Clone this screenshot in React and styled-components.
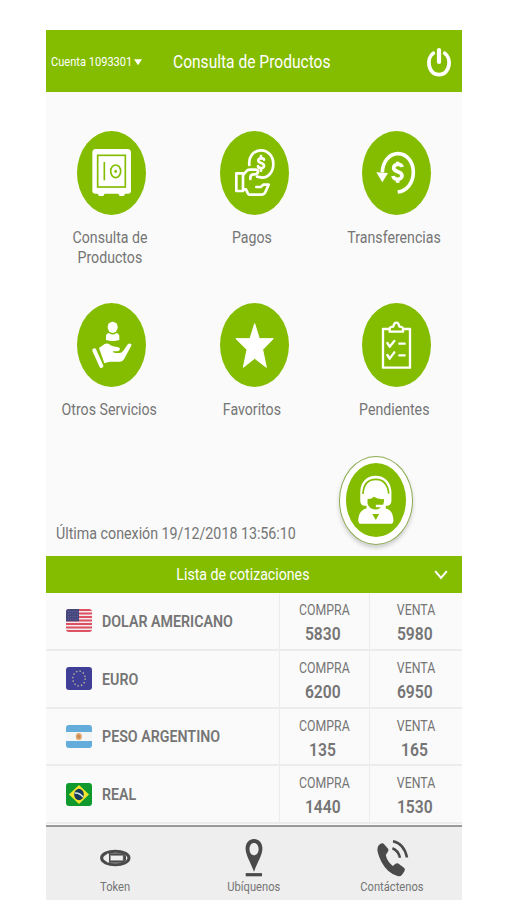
import React, { Fragment } from 'react';
import styled, { createGlobalStyle } from 'styled-components';

const GREEN = '#84bd00';

const SafeIcon = () => (
  <TileSvg viewBox="21 18 207 252">
    <path fill="#fff" d="M77 72H172Q183 72 183 83V197Q183 206 174 206H165L162 213H149L145 206H104L100 213H87L83 206H76Q67 206 67 197V83Q67 72 77 72Z" />
    <rect x="83" y="91" width="83" height="95" fill="none" stroke={GREEN} strokeWidth="5" />
    <path d="M103 111V166" stroke={GREEN} strokeWidth="5" />
    <ellipse cx="137" cy="139" rx="15" ry="19" fill="none" stroke={GREEN} strokeWidth="5" />
    <ellipse cx="137" cy="139" rx="4" ry="5" fill={GREEN} />
  </TileSvg>
);

const PayIcon = () => (
  <TileSvg viewBox="28 18 207 252">
    <g fill="none" stroke="#fff" strokeWidth="8" strokeLinejoin="round" strokeLinecap="round">
      <rect x="77" y="145" width="20" height="53" />
      <path d="M98 149L109 137Q112 134 118 134H136Q143 135 142 142Q141 148 130 148Q119 148 119 158V162" />
      <path d="M98 193H106L112 206Q114 209 119 209H153Q162 208 165 199L174 179H158L150 186H137" />
      <path d="M116 120C113 96 128 76 151 76C172 76 188 94 188 116C188 140 174 158 154 158L139 155" />
      <path d="M160 104C159 99 144 98 143 106C142 116 161 112 160 123C159 132 143 131 142 123M151 93V99M151 130V137" />
    </g>
  </TileSvg>
);

const TransferIcon = () => (
  <TileSvg viewBox="66 18 207 252">
    <path d="M127 142C128 111 147 86 174 86C201 86 220 111 220 142C220 174 200 198 173 201" fill="none" stroke="#fff" strokeWidth="11" />
    <path d="M109 142L144 144L127 172Z" fill="#fff" />
    <path d="M186 126C184 115 161 116 161 129C162 143 186 137 186 152C186 166 161 166 159 153M173 110V119M173 162V173" fill="none" stroke="#fff" strokeWidth="11" />
  </TileSvg>
);

const ServicesIcon = () => (
  <TileSvg viewBox="66 15 207 252">
    <ellipse cx="173" cy="88" rx="15" ry="17" fill="#fff" />
    <path d="M153 126V115Q153 107 162 105Q173 114 184 105Q193 107 193 115V126Q173 132 153 126Z" fill="#fff" />
    <path d="M118 157L139 204" stroke="#fff" strokeWidth="12" strokeLinecap="round" />
    <path fill="#fff" d="M132 150L149 138Q153 135 160 137Q172 147 186 147Q194 147 195 153Q195 159 187 160H173Q174 165 181 165H193Q200 165 205 158L219 138Q225 134 229 139Q230 141 228 145L207 184Q203 191 195 191H167Q157 191 148 196Z" />
  </TileSvg>
);

const StarIcon = () => (
  <TileSvg viewBox="28 15 207 252">
    <path fill="#fff" stroke="#fff" strokeWidth="3" strokeLinejoin="round" d="M132 77L146 122H188L156 155L167 208L132 181L98 208L109 155L76 122H118Z" />
  </TileSvg>
);

const PendingIcon = () => (
  <TileSvg viewBox="36 15 207 252">
    <g fill="none" stroke="#fff" strokeWidth="7" strokeLinejoin="round" strokeLinecap="round">
      <path d="M117 93H99V209H180V93H160" />
      <path d="M119 101V92Q120 86 130 86Q132 74 139 74Q146 74 148 86Q158 86 159 92V101Z" />
      <path d="M112 135L119 146L133 129M148 137H164M112 171L119 182L133 163M148 172H164" />
    </g>
  </TileSvg>
);

const AgentIcon = () => (
  <svg viewBox="48 40 181 222" width="60" height="74">
    <path fill="#fff" d="M91 153V125C93 94 112 78 138 78C164 78 183 96 185 125V154Q184 165 175 168H168V177C182 181 190 190 191 212Q191 223 183 223H94Q85 223 85 212C86 190 96 180 110 176V168H101Q91 165 91 153Z" />
    <path d="M99 133C101 101 117 89 138 89C160 89 174 104 177 132" fill="none" stroke={GREEN} strokeWidth="5" />
    <path fill={GREEN} d="M113 148Q125 149 132 141Q146 150 163 148Q163 158 160 165H138V173H154Q147 180 136 180Q119 178 113 162ZM127 193H148L138 211Z" />
  </svg>
);

const UsaFlag = () => (
  <FlagSvg viewBox="0 0 26 23">
    <rect width="26" height="23" fill="#f4e9ec" />
    <path d="M0 1H26M0 4.5H26M0 8H26M0 11.5H26M0 15H26M0 18.5H26M0 22H26" stroke="#dc5262" strokeWidth="1.8" />
    <rect width="13" height="12.3" fill="#46467f" />
    <path d="M2 2.5H12M2 5H12M2 7.5H12M2 10H12" stroke="#77779f" strokeWidth="0.7" strokeDasharray="1 1.2" />
  </FlagSvg>
);

const EuroFlag = () => (
  <FlagSvg viewBox="0 0 26 23">
    <rect width="26" height="23" fill="#403f98" />
    <ellipse cx="13" cy="11.5" rx="6.2" ry="7.4" fill="none" stroke="#c0bd92" strokeWidth="1.3" strokeDasharray="1.4 2.17" />
  </FlagSvg>
);

const ArgentinaFlag = () => (
  <FlagSvg viewBox="0 0 26 23">
    <rect width="26" height="23" fill="#f3f5f7" />
    <path d="M0 0H26V7H0ZM0 16H26V23H0Z" fill="#64acd9" />
    <ellipse cx="12.8" cy="11.5" rx="3" ry="3.6" fill="#dfa467" />
    <ellipse cx="12.8" cy="11.5" rx="1.3" ry="1.7" fill="#c48653" />
  </FlagSvg>
);

const BrazilFlag = () => (
  <FlagSvg viewBox="0 0 26 23">
    <rect width="26" height="23" fill="#109a2d" />
    <path d="M3 11.5L13 2L23 11.5L13 21Z" fill="#f1e52d" />
    <ellipse cx="13" cy="11.5" rx="4.8" ry="5.7" fill="#173b59" />
    <path d="M8.7 10Q13.5 9.5 17 14" fill="none" stroke="#d8e7e7" strokeWidth="1.5" />
  </FlagSvg>
);

const TokenIcon = () => (
  <svg width="31" height="40" viewBox="0 0 31 40">
    <ellipse cx="15.3" cy="23" rx="13.7" ry="6.8" fill="#eee" stroke="#4a4a4a" strokeWidth="3" />
    <path d="M9 18.3H23L26 21V25L23 27.7H9Z" fill="#4a4a4a" />
    <rect x="10.5" y="20.6" width="12.5" height="4.8" fill="#eee" stroke="#999" strokeWidth="0.6" />
    <path d="M7.7 18.5V27.5" stroke="#eee" strokeWidth="1.2" />
  </svg>
);

const PinIcon = () => (
  <svg width="18" height="40" viewBox="0 0 18 40">
    <path fill="#4a4a4a" fillRule="evenodd" d="M9 4C14 4 17.4 8 17.4 13.5C17.4 20 12.5 27 9 36.8C5.5 27 .6 20 .6 13.5C.6 8 4 4 9 4ZM9 8C6.2 8 4.5 10.7 4.5 14.1C4.5 17.6 6.2 20.3 9 20.3C11.8 20.3 13.6 17.6 13.6 14.1C13.6 10.7 11.8 8 9 8Z" />
    <path d="M.7 39.7H17" stroke="#4a4a4a" strokeWidth="3.2" />
  </svg>
);

const CallIcon = () => (
  <svg width="31" height="40" viewBox="0 0 31 40">
    <path fill="#4a4a4a" d="M2 10L4 8.5Q6 7.7 7.4 9.6L11.2 14Q12 15.8 10.4 17.5L8.8 20Q9.8 26 15.7 31L19 28.6Q20.7 27.5 22.3 29.2L27.3 33Q28.5 34.6 27.3 36.5L24.8 40Q23.5 41.7 20.5 41Q10.6 38.4 4.5 27Q-.8 16.2 .8 12Q1 10.8 2 10Z" />
    <path d="M16 6.3Q27 8.5 30 22.5M15.4 13.2Q21 15 23 22.7" fill="none" stroke="#4a4a4a" strokeWidth="2.5" />
  </svg>
);

const services = [
  { lines: ['Consulta de', 'Productos'], icon: SafeIcon },
  { lines: ['Pagos'], icon: PayIcon },
  { lines: ['Transferencias'], icon: TransferIcon },
  { lines: ['Otros Servicios'], icon: ServicesIcon },
  { lines: ['Favoritos'], icon: StarIcon },
  { lines: ['Pendientes'], icon: PendingIcon },
];

const rates = [
  { name: 'DOLAR AMERICANO', flag: UsaFlag, buy: 5830, sell: 5980 },
  { name: 'EURO', flag: EuroFlag, buy: 6200, sell: 6950 },
  { name: 'PESO ARGENTINO', flag: ArgentinaFlag, buy: 135, sell: 165 },
  { name: 'REAL', flag: BrazilFlag, buy: 1440, sell: 1530 },
];

const links = [
  { label: 'Token', icon: TokenIcon },
  { label: 'Ubíquenos', icon: PinIcon },
  { label: 'Contáctenos', icon: CallIcon },
];

const App = () => {
  return (
    <Fragment>
      <GlobalStyle />
      <Screen>
        <Header>
          <Account>
            <Text size={13.3} left="true">Cuenta 1093301</Text>
            <Caret />
          </Account>
          <Title>
            <Text size={18.7} left="true">Consulta de Productos</Text>
          </Title>
          <svg width="24" height="30" viewBox="0 0 24 30">
            <path d="M6.3 6.2C-.8 11 .5 27.6 12 27.6C23.5 27.6 24.8 11 17.7 6.2" fill="none" stroke="#fff" strokeWidth="3.8" strokeLinecap="round" />
            <path d="M12 3V15" stroke="#fff" strokeWidth="4.2" strokeLinecap="round" />
          </svg>
        </Header>
        <Services>
          {services.map(({ lines, icon: Icon }) => (
            <Tile key={lines[0]}>
              <Disc><Icon /></Disc>
              <TileLabel>
                {lines.map(line => <Text key={line} size={17}>{line}</Text>)}
              </TileLabel>
            </Tile>
          ))}
        </Services>
        <Session>
          <LastLogin>
            <Text size={17.1} left="true">Última conexión 19/12/2018 13:56:10</Text>
          </LastLogin>
          <AgentButton>
            <AgentDisc><AgentIcon /></AgentDisc>
          </AgentButton>
        </Session>
        <RatesBar>
          <RatesTitle><Text size={17}>Lista de cotizaciones</Text></RatesTitle>
          <svg width="14" height="10" viewBox="0 0 14 10">
            <path d="M1.2 2.2L7 9L12.8 2.2" fill="none" stroke="#fff" strokeWidth="2" />
          </svg>
        </RatesBar>
        {rates.map(({ name, flag: Flag, buy, sell }) => (
          <RateRow key={name}>
            <Currency>
              <Flag />
              <Text size={17.1} weight={600} left="true">{name}</Text>
            </Currency>
            <Price>
              <Text size={14.8}>COMPRA</Text>
              <Amount>{buy}</Amount>
            </Price>
            <Price>
              <Text size={14.8}>VENTA</Text>
              <Amount>{sell}</Amount>
            </Price>
          </RateRow>
        ))}
        <Footer>
          {links.map(({ label, icon: Icon }) => (
            <FooterLink key={label}>
              <Icon />
              <Text size={13.4}>{label}</Text>
            </FooterLink>
          ))}
        </Footer>
      </Screen>
    </Fragment>
  )
}

const GlobalStyle = createGlobalStyle`
  * {
    box-sizing: border-box;
  }

  body {
    margin: 0;
    background: #fff;
    font-family: Roboto, "Liberation Sans", sans-serif;
    overflow: hidden;
  }

  svg {
    display: block;
    flex: none;
    overflow: visible;
  }
`;

const Screen = styled.div`
  display: flex;
  flex-direction: column;
  width: 416px;
  height: 870px;
  margin: 30px 0 0 46px;
  background: #fafafa;
  color: #757575;
  overflow: hidden;
`;

// Roboto drawn narrow, as the app sets all of its labels
const Text = styled.span.withConfig({
  shouldForwardProp: prop => !['size', 'weight', 'left'].includes(prop),
})`
  display: inline-block;
  font-size: ${props => props.size}px;
  font-weight: ${props => props.weight || 400};
  line-height: 20px;
  white-space: nowrap;
  transform: scaleX(0.833);
  transform-origin: ${props => (props.left ? 'left' : 'center')};
`;

const Amount = styled(Text).attrs({ size: 18.8, weight: 600 })`
  padding-right: 4px;
`;

const Header = styled.header`
  display: flex;
  align-items: center;
  height: 61.5px;
  padding: 3px 11px 0 5px;
  flex: none;
  background: ${GREEN};
  color: #fff;
`;

const Account = styled.div`
  display: grid;
  grid-template-columns: 83px 9px;
  align-items: center;
  width: 122px;
`;

const Caret = styled.span`
  width: 8px;
  height: 6px;
  background: #fff;
  clip-path: polygon(0 0, 100% 0, 50% 100%);
`;

const Title = styled.div`
  flex: 1;
`;

const Services = styled.div`
  display: grid;
  grid-template-columns: repeat(3, 142.3px);
  grid-auto-rows: 172.3px;
  justify-content: center;
  height: 344px;
  margin-top: 39.5px;
  flex: none;
`;

const Tile = styled.div`
  display: flex;
  flex-direction: column;
  align-items: center;
`;

const Disc = styled.div`
  width: 69px;
  height: 84px;
  border-radius: 50%;
  background: ${GREEN};
`;

const TileSvg = styled.svg`
  width: 69px;
  height: 84px;
`;

const TileLabel = styled.div`
  display: flex;
  flex-direction: column;
  align-items: center;
  padding: 12px 4px 0 0;
`;

const Session = styled.div`
  display: flex;
  justify-content: space-between;
  align-items: flex-end;
  height: 80.5px;
  padding: 0 49px 11px 10px;
  flex: none;
`;

const LastLogin = styled.div`
  padding-bottom: 2px;
  height: 22px;
  width: 250px;
`;

const AgentButton = styled.div`
  display: flex;
  align-items: center;
  justify-content: center;
  width: 74px;
  height: 89px;
  border: 1px solid #8dac50;
  border-radius: 50%;
  background: #fff;
  box-shadow: 0 3px 4px rgba(0, 0, 0, 0.18);
`;

const AgentDisc = styled.div`
  width: 60px;
  height: 74px;
  border-radius: 50%;
  background: ${GREEN};
`;

const RatesBar = styled.div`
  display: flex;
  align-items: center;
  height: 37.5px;
  padding: 0 14px 0 6px;
  flex: none;
  background: ${GREEN};
  color: #fff;
`;

const RatesTitle = styled.div`
  flex: 1;
  text-align: center;
`;

const RateRow = styled.div`
  display: grid;
  grid-template-columns: 233px 90px 93px;
  height: 57.8px;
  flex: none;
  border-bottom: 2px solid #ececec;
`;

const Currency = styled.div`
  display: flex;
  align-items: center;
  gap: 9.5px;
  padding-left: 20px;
`;

const FlagSvg = styled.svg`
  width: 26px;
  height: 23px;
  border-radius: 3px;
  && {
    overflow: hidden;
  }
`;

const Price = styled.div`
  display: flex;
  flex-direction: column;
  align-items: center;
  justify-content: center;
  gap: 4px;
  padding-top: 2.4px;
  border-left: 1px solid #ececec;
`;

const Footer = styled.footer`
  display: grid;
  grid-template-columns: repeat(3, 138.5px);
  flex: 1;
  margin-top: 1px;
  border-top: 2px solid #999;
  background: #eee;
`;

const FooterLink = styled.div`
  display: flex;
  flex-direction: column;
  align-items: center;
  padding-top: 8px;
  gap: 2px;
`;

export default App;
